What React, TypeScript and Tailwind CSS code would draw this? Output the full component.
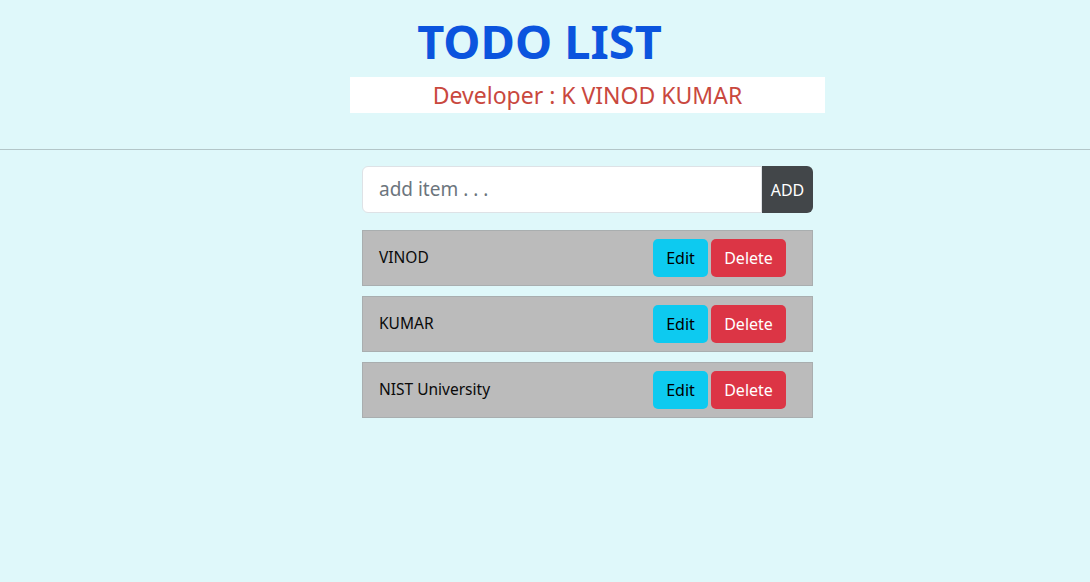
const items = ['VINOD', 'KUMAR', 'NIST University'];

export default function App() {
  return (
    <div className="min-h-[582px] bg-[#dff8fa] font-['Noto_Sans',sans-serif]">
      {/* Header */}
      <header className="h-[150px] border-b border-[#b3c6c8] pt-[10px]">
        <h1 className="pr-[11px] text-center text-[47px] font-bold leading-[62px] text-[#0b54de]">TODO LIST</h1>
        <div className="ml-[350px] mt-[5px] flex h-[36px] w-[475px] items-center justify-center bg-white text-[23px] text-[#c9483e]">
          Developer : K VINOD KUMAR
        </div>
      </header>

      {/* Main */}
      <main className="flex justify-center pl-[85px] pt-[16px]">
        <div className="w-[451px]">
          <div className="flex h-[47px]">
            <input
              className="min-w-0 flex-1 rounded-l-md border border-[#dee2e6] bg-white px-4 text-[19px] text-gray-700 outline-none placeholder:text-[#6c757d]"
              placeholder="add item . . ."
            />
            <button className="w-[51px] rounded-r-md bg-[#424649] text-[16px] text-white">ADD</button>
          </div>

          <ul className="mt-[17px] flex flex-col gap-[10px]">
            {items.map((item) => (
              <li
                key={item}
                className="flex h-[56px] items-center justify-between border border-[#a9aeaf] bg-[#bbbbbb] pl-4 pr-[26px] text-[15.5px] text-[#0a0a0a]"
              >
                <span>{item}</span>
                <div className="flex gap-[3px]">
                  <button className="h-[38px] w-[55px] rounded-[5px] bg-[#0dcaf0] text-[16px] text-black">Edit</button>
                  <button className="h-[38px] w-[75px] rounded-[5px] bg-[#dc3545] text-[16px] text-white">Delete</button>
                </div>
              </li>
            ))}
          </ul>
        </div>
      </main>
    </div>
  );
}
